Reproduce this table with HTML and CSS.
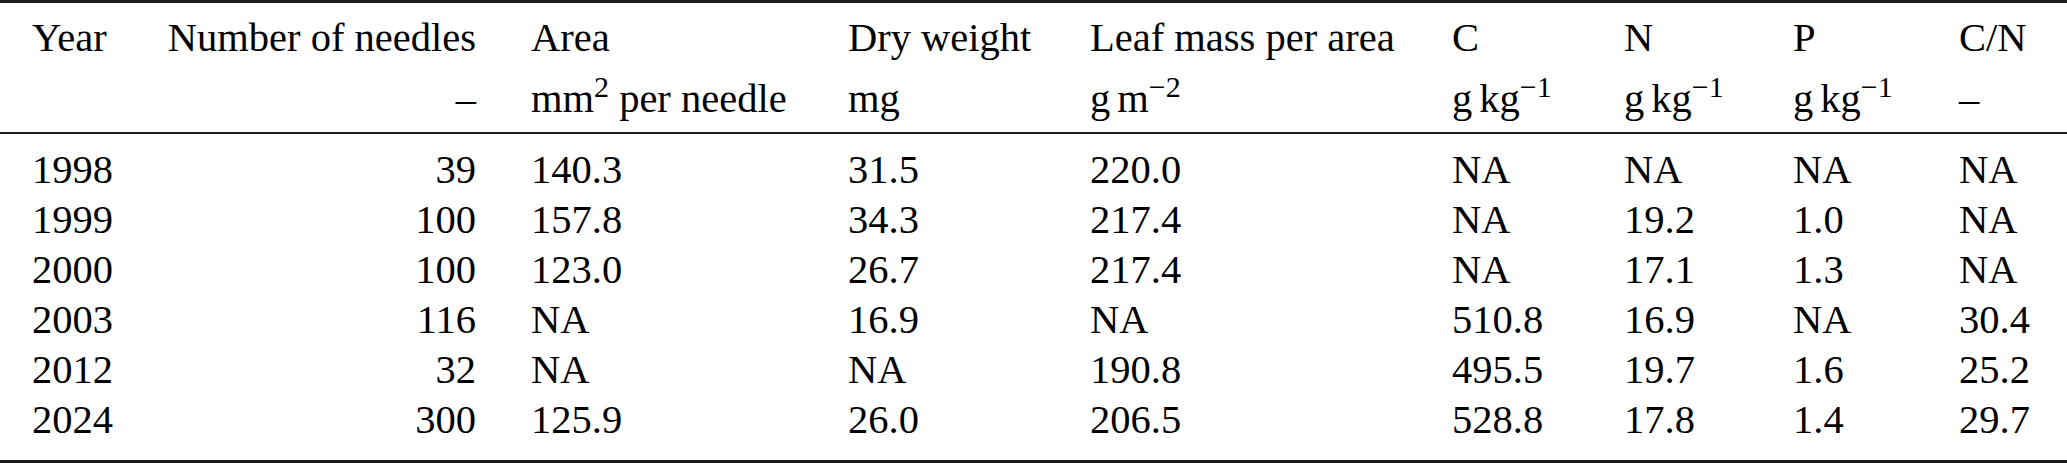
FILE: index.html
```html
<!DOCTYPE html>
<html lang="en">
<head>
<meta charset="utf-8">
<title>Needle traits</title>
<link rel="stylesheet" href="styles.css">
</head>
<body>
<div class="table">
  <div class="rule rule-top"></div>
  <div class="row head">
    <div class="cell"><span class="l">Year</span><span class="l">&nbsp;</span></div>
    <div class="cell right"><span class="l">Number of needles</span><span class="l">–</span></div>
    <div class="cell pad"><span class="l">Area</span><span class="l">mm<sup>2</sup> per needle</span></div>
    <div class="cell"><span class="l">Dry weight</span><span class="l">mg</span></div>
    <div class="cell"><span class="l">Leaf mass per area</span><span class="l">g<span class="thin"></span>m<sup>−2</sup></span></div>
    <div class="cell"><span class="l">C</span><span class="l">g<span class="thin"></span>kg<sup>−1</sup></span></div>
    <div class="cell"><span class="l">N</span><span class="l">g<span class="thin"></span>kg<sup>−1</sup></span></div>
    <div class="cell"><span class="l">P</span><span class="l">g<span class="thin"></span>kg<sup>−1</sup></span></div>
    <div class="cell"><span class="l">C/N</span><span class="l">–</span></div>
  </div>
  <div class="rule rule-mid"></div>
  <div class="body">
    <div class="row">
      <div class="cell">1998</div><div class="cell right">39</div><div class="cell pad">140.3</div><div class="cell">31.5</div><div class="cell">220.0</div><div class="cell">NA</div><div class="cell">NA</div><div class="cell">NA</div><div class="cell">NA</div>
    </div>
    <div class="row">
      <div class="cell">1999</div><div class="cell right">100</div><div class="cell pad">157.8</div><div class="cell">34.3</div><div class="cell">217.4</div><div class="cell">NA</div><div class="cell">19.2</div><div class="cell">1.0</div><div class="cell">NA</div>
    </div>
    <div class="row">
      <div class="cell">2000</div><div class="cell right">100</div><div class="cell pad">123.0</div><div class="cell">26.7</div><div class="cell">217.4</div><div class="cell">NA</div><div class="cell">17.1</div><div class="cell">1.3</div><div class="cell">NA</div>
    </div>
    <div class="row">
      <div class="cell">2003</div><div class="cell right">116</div><div class="cell pad">NA</div><div class="cell">16.9</div><div class="cell">NA</div><div class="cell">510.8</div><div class="cell">16.9</div><div class="cell">NA</div><div class="cell">30.4</div>
    </div>
    <div class="row">
      <div class="cell">2012</div><div class="cell right">32</div><div class="cell pad">NA</div><div class="cell">NA</div><div class="cell">190.8</div><div class="cell">495.5</div><div class="cell">19.7</div><div class="cell">1.6</div><div class="cell">25.2</div>
    </div>
    <div class="row">
      <div class="cell">2024</div><div class="cell right">300</div><div class="cell pad">125.9</div><div class="cell">26.0</div><div class="cell">206.5</div><div class="cell">528.8</div><div class="cell">17.8</div><div class="cell">1.4</div><div class="cell">29.7</div>
    </div>
  </div>
  <div class="rule rule-bottom"></div>
</div>
</body>
</html>
```
FILE: styles.css
```css
html, body {
  margin: 0;
  padding: 0;
  background: #ffffff;
}

body {
  width: 2067px;
  height: 463px;
  overflow: hidden;
  font-family: "Liberation Serif", "Times New Roman", serif;
  font-size: 40.5px;
  color: #000000;
}

.table {
  width: 2067px;
  display: flex;
  flex-direction: column;
}

.rule {
  background: #1c1c1c;
  width: 100%;
}

.rule-top {
  height: 3px;
}

.rule-mid {
  height: 2px;
}

.rule-bottom {
  height: 3px;
}

.row {
  display: grid;
  grid-template-columns: 133px 311px 372px 242px 362px 172px 169px 166px 1fr;
  padding-left: 32px;
  line-height: 50px;
  white-space: nowrap;
}

.head {
  padding-top: 4px;
  padding-bottom: 3px;
  line-height: 61px;
}

.head .cell {
  display: flex;
  flex-direction: column;
}

.head .cell.right {
  align-items: flex-end;
}

.l {
  display: block;
  height: 61px;
}

.body {
  padding-top: 11px;
  padding-bottom: 15px;
}

.cell.right {
  text-align: right;
}

.cell.pad {
  padding-left: 55px;
}

sup {
  font-size: 30px;
  line-height: 0;
  vertical-align: 15px;
}

.thin {
  display: inline-block;
  width: 7px;
}
```
